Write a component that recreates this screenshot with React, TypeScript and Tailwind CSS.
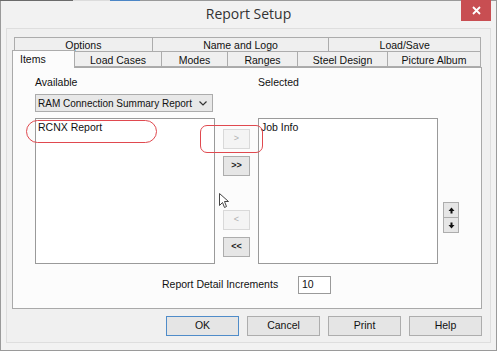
import { ReactNode } from 'react'

function Tab({ label, w, active }: { label: string; w: number; active?: boolean }) {
  return (
    <div
      style={{ width: w }}
      className={
        active
          ? 'relative z-10 -mt-[1px] h-[18px] border border-b-0 border-[#acacac] bg-[#fcfcfc] pl-[7px] pt-[1px] text-left'
          : 'h-[16px] border border-l-0 border-[#acacac] bg-[#efefef] text-center leading-[16px]'
      }
    >
      {label}
    </div>
  )
}

function Btn({ children, disabled, className = '' }: { children: ReactNode; disabled?: boolean; className?: string }) {
  return (
    <div
      className={
        'flex h-[20px] w-[27px] items-center justify-center border text-[9px] font-bold ' +
        (disabled ? 'border-[#d9d9d9] bg-[#f4f4f4] text-[#b0b0b0] font-normal' : 'border-[#adadad] bg-[#e6e6e6] text-[#222]') +
        ' ' +
        className
      }
    >
      {children}
    </div>
  )
}

function DlgButton({ label, primary }: { label: string; primary?: boolean }) {
  return (
    <div
      className={
        'flex h-[20px] w-[73px] items-center justify-center border bg-[#e5e5e5] ' +
        (primary ? 'border-[#4f8cc9]' : 'border-[#adadad]')
      }
    >
      {label}
    </div>
  )
}

export default function App() {
  return (
    <div className="relative h-[351px] w-[497px] overflow-hidden bg-[#f2f2f2] font-['Liberation_Sans',Arial,sans-serif] text-[10.5px] text-[#111]">
      {/* desktop strip behind the window */}
      <div className="flex h-[1px]">
        <div className="w-[73px] bg-[#6b6b6b]" />
        <div className="w-[37px] bg-[#dcdcdc]" />
        <div className="w-[30px] bg-[#4c86c6]" />
        <div className="flex-1 bg-[#9a9a9a]" />
      </div>
      <div className="flex h-[350px] flex-col border-x border-b border-[#9a9a9a]">
        {/* title bar */}
        <div className="relative flex h-[27px] items-center justify-center">
          <span className="font-['Open_Sans',sans-serif] text-[14px] text-[#333] -mt-[3px]">Report Setup</span>
          <div className="absolute right-[5px] top-[-1px] flex h-[21px] w-[30px] items-center justify-center bg-[#c84e52]">
            <svg width="9" height="9" viewBox="0 0 9 9">
              <path d="M1 1L8 8M8 1L1 8" stroke="#fff" strokeWidth="1.8" />
            </svg>
          </div>
        </div>

        {/* client area */}
        <div className="mx-[5px] h-[315px] border border-[#dedede] bg-[#f0f0f0] pl-[5px] pt-[8px]">
          {/* tab strip */}
          <div className="ml-[2px] flex w-[467px] border-l border-[#acacac]">
            <div className="h-[15px] w-[138px] border border-l-0 border-[#acacac] bg-[#efefef] text-center leading-[14px]">Options</div>
            <div className="h-[15px] w-[177px] border border-l-0 border-[#acacac] bg-[#efefef] text-center leading-[14px]">Name and Logo</div>
            <div className="h-[15px] w-[152px] border border-l-0 border-[#acacac] bg-[#efefef] text-center leading-[14px]">Load/Save</div>
          </div>
          <div className="-mt-[1px] flex items-start">
            <Tab label="Items" w={63} active />
            <Tab label="Load Cases" w={87} />
            <Tab label="Modes" w={66} />
            <Tab label="Ranges" w={70} />
            <Tab label="Steel Design" w={90} />
            <Tab label="Picture Album" w={93} />
          </div>

          {/* tab page */}
          <div className="-mt-[1px] flex h-[242px] w-[470px] flex-col border border-[#a9a9a9] bg-[#fcfcfc]">
            <div className="flex">
              <div className="ml-[22px] mt-[8px] flex w-[180px] flex-col">
                <div className="h-[13px] leading-[13px]">Available</div>
                <div className="mt-[5px] flex h-[18px] w-[178px] items-center justify-between whitespace-nowrap border border-[#acacac] bg-[#e8e8e8] pl-[2px] pr-[5px] text-[10px]">
                  <span>RAM Connection Summary Report</span>
                  <svg width="8" height="5" viewBox="0 0 8 5">
                    <path d="M0.5 0.5L4 4L7.5 0.5" stroke="#333" strokeWidth="1.2" fill="none" />
                  </svg>
                </div>
                <div className="mt-[6px] h-[146px] border border-[#9a9a9a] bg-white pl-[2px] pt-[1px]">RCNX Report</div>
              </div>

              <div className="ml-[8px] mt-[61px] flex flex-col">
                <Btn disabled>&gt;</Btn>
                <Btn className="mt-[7px]">&gt;&gt;</Btn>
                <Btn disabled className="mt-[34px]">&lt;</Btn>
                <Btn className="mt-[7px]">&lt;&lt;</Btn>
              </div>

              <div className="ml-[8px] mt-[8px] flex w-[180px] flex-col">
                <div className="h-[13px] leading-[13px]">Selected</div>
                <div className="mt-[29px] h-[146px] border border-[#9a9a9a] bg-white pl-[2px] pt-[1px]">Job Info</div>
              </div>

              <div className="ml-[5px] mt-[134px] flex flex-col">
                <div className="flex h-[16px] w-[16px] items-center justify-center border border-[#adadad] bg-[#e6e6e6]">
                  <svg width="7" height="7" viewBox="0 0 7 7">
                    <path d="M3.5 0.5L6.5 4H4.5V6.5H2.5V4H0.5Z" fill="#111" />
                  </svg>
                </div>
                <div className="-mt-[1px] flex h-[16px] w-[16px] items-center justify-center border border-[#adadad] bg-[#e6e6e6]">
                  <svg width="7" height="7" viewBox="0 0 7 7">
                    <path d="M3.5 6.5L6.5 3H4.5V0.5H2.5V3H0.5Z" fill="#111" />
                  </svg>
                </div>
              </div>
            </div>

            <div className="ml-[149px] mt-[12px] flex items-center">
              <span className="w-[136px]">Report Detail Increments</span>
              <div className="h-[18px] w-[33px] border border-[#9a9a9a] bg-white pl-[3px] leading-[15px]">10</div>
            </div>
          </div>

          {/* dialog buttons */}
          <div className="mt-[7px] flex w-[470px] justify-end gap-[8px]">
            <DlgButton label="OK" primary />
            <DlgButton label="Cancel" />
            <DlgButton label="Print" />
            <DlgButton label="Help" />
          </div>
        </div>
      </div>

      {/* red annotation marks */}
      <div className="absolute left-[26px] top-[120px] h-[23px] w-[131px] rounded-[12px] border border-[#e0494f]" />
      <div className="absolute left-[200px] top-[125px] h-[28px] w-[63px] rounded-[7px] border border-[#e0494f]" />

      {/* mouse pointer */}
      <svg className="absolute left-[219px] top-[193px]" width="10" height="16" viewBox="0 0 10 16">
        <path d="M0.5 0.5V12.5L3.5 9.5L5.5 14.5L7.5 13.5L5.5 8.5H9.5Z" fill="#fff" stroke="#444" strokeWidth="1" />
      </svg>
    </div>
  )
}
